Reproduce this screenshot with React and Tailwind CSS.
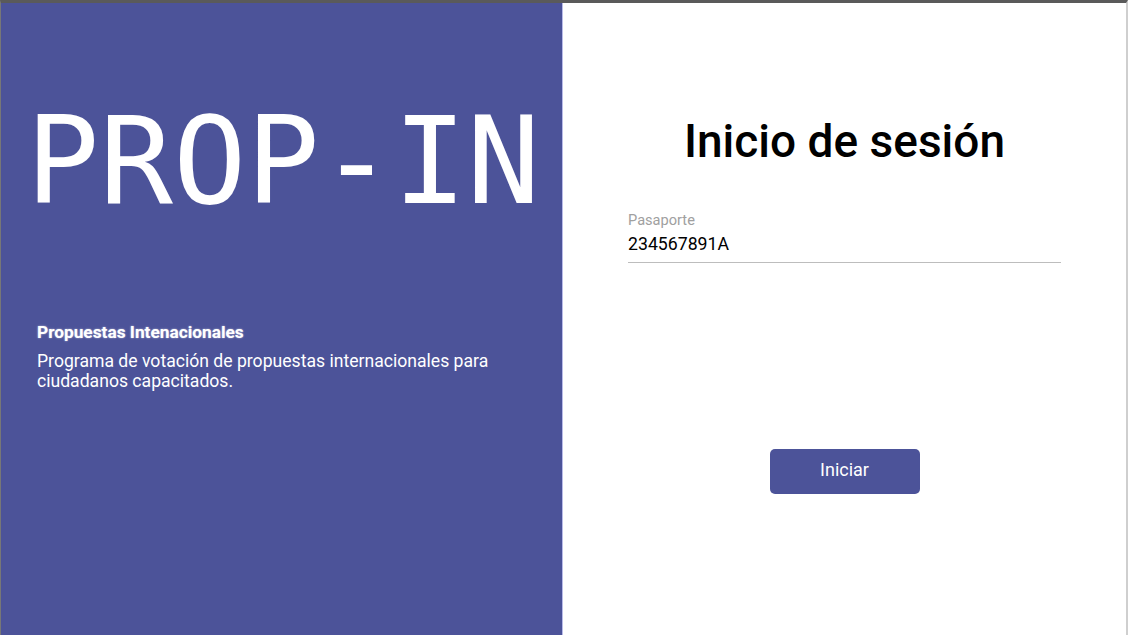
export default function App() {
  return (
    <div className="w-[1128px] h-[635px] border-t-[3px] border-t-[#5a5a5a] border-l border-l-[#777] border-r-2 border-r-[#cfcfcf] flex overflow-hidden">
      <div className="w-[562px] h-full bg-[#4c5399] border-r border-r-[#b9bbe8] flex flex-col">
        <div className="pl-[25px] pt-[97px] text-white leading-none text-[122px] whitespace-nowrap" style={{ fontFamily: '"DejaVu Sans Mono", monospace' }}>
          PROP-IN
        </div>
        <div className="pl-[36px] pt-[100px] text-white" style={{ fontFamily: 'Roboto, "Noto Sans", sans-serif' }}>
          <div className="font-bold text-[17.3px] leading-[20px] [text-shadow:0_0_2px_rgba(255,255,255,0.6)]">Propuestas Intenacionales</div>
          <div className="mt-[9px] text-[17.6px] leading-[20px] pr-[60px]">
            Programa de votación de propuestas internacionales para ciudadanos capacitados.
          </div>
        </div>
      </div>
      <div className="flex-1 h-full bg-white flex flex-col items-center" style={{ fontFamily: 'Roboto, "Noto Sans", sans-serif' }}>
        <h1 className="mt-[110px] text-[46px] leading-[56px] text-black font-medium">Inicio de sesión</h1>
        <div className="self-stretch mt-[43px] w-[433px] ml-[65px]">
          <div className="text-[14.6px] leading-[16px] text-[#a0a0a0]">Pasaporte</div>
          <div className="mt-[6px] text-[17.7px] leading-[20px] text-black pb-[8px] border-b border-b-[#bdbdbd]">234567891A</div>
        </div>
        <button className="mt-[186px] w-[150px] h-[45px] rounded-[5px] bg-[#4c5399] text-white text-[18px] leading-[20px] pb-[3px]">
          Iniciar
        </button>
      </div>
    </div>
  );
}
